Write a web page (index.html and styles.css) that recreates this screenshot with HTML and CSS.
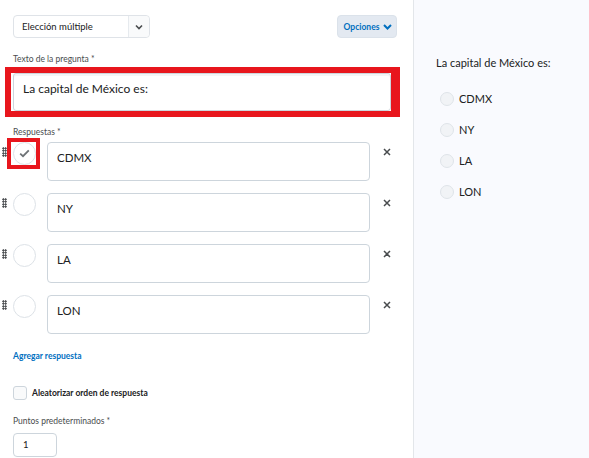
FILE: index.html
```html
<!DOCTYPE html>
<html lang="es">
<head>
<meta charset="utf-8">
<link rel="stylesheet" href="styles.css">
</head>
<body>
<div class="page">
  <div class="editor">
    <div class="toolbar">
      <div class="select">
        <span class="select-text">Elección múltiple</span>
        <span class="select-btn">
          <svg width="8" height="6" viewBox="0 0 8 6"><path d="M1 1.5 L4 4.5 L7 1.5" fill="none" stroke="#494c4e" stroke-width="1.6"/></svg>
        </span>
      </div>
      <button class="options">Opciones
        <svg width="9" height="6" viewBox="0 0 9 6"><path d="M1 1 L4.5 4.5 L8 1" fill="none" stroke="#006fbf" stroke-width="2"/></svg>
      </button>
    </div>

    <div class="label q-label">Texto de la pregunta *</div>
    <div class="highlight">
      <div class="textarea">La capital de México es:</div>
    </div>

    <div class="label a-label">Respuestas *</div>
    <div class="answers">
      <div class="answer">
        <span class="drag"></span>
        <span class="mark-hl"><span class="radio checked">
          <svg width="11" height="9" viewBox="0 0 11 9"><path d="M1.2 4.6 L4 7.2 L9.8 1.3" fill="none" stroke="#6e7376" stroke-width="1.8"/></svg>
        </span></span>
        <div class="ans-box">CDMX</div>
        <span class="remove"><svg width="8" height="8" viewBox="0 0 8 8"><path d="M1 1 L7 7 M7 1 L1 7" stroke="#494c4e" stroke-width="1.5"/></svg></span>
      </div>
      <div class="answer">
        <span class="drag"></span>
        <span class="mark"><span class="radio"></span></span>
        <div class="ans-box">NY</div>
        <span class="remove"><svg width="8" height="8" viewBox="0 0 8 8"><path d="M1 1 L7 7 M7 1 L1 7" stroke="#494c4e" stroke-width="1.5"/></svg></span>
      </div>
      <div class="answer">
        <span class="drag"></span>
        <span class="mark"><span class="radio"></span></span>
        <div class="ans-box">LA</div>
        <span class="remove"><svg width="8" height="8" viewBox="0 0 8 8"><path d="M1 1 L7 7 M7 1 L1 7" stroke="#494c4e" stroke-width="1.5"/></svg></span>
      </div>
      <div class="answer">
        <span class="drag"></span>
        <span class="mark"><span class="radio"></span></span>
        <div class="ans-box">LON</div>
        <span class="remove"><svg width="8" height="8" viewBox="0 0 8 8"><path d="M1 1 L7 7 M7 1 L1 7" stroke="#494c4e" stroke-width="1.5"/></svg></span>
      </div>
    </div>

    <a class="add-link">Agregar respuesta</a>

    <label class="check-row"><span class="checkbox"></span><span class="check-label">Aleatorizar orden de respuesta</span></label>

    <div class="label p-label">Puntos predeterminados *</div>
    <div class="points">1</div>
  </div>

  <div class="preview">
    <div class="preview-q">La capital de México es:</div>
    <ul class="preview-list">
      <li><span class="p-radio"></span>CDMX</li>
      <li><span class="p-radio"></span>NY</li>
      <li><span class="p-radio"></span>LA</li>
      <li><span class="p-radio"></span>LON</li>
    </ul>
  </div>
</div>
</body>
</html>
```
FILE: styles.css
```css
* { box-sizing: border-box; }
html, body { margin: 0; padding: 0; }
body {
  font-family: Lato, "Open Sans", sans-serif;
  color: #202122;
  background: #fff;
  width: 589px;
  height: 458px;
  overflow: hidden;
}
.page {
  display: flex;
  height: 458px;
}
.editor {
  width: 414px;
  flex: none;
  border-right: 1px solid #e3e6ea;
  padding: 15px 16px 0 13px;
  background: #fff;
}
.toolbar {
  display: flex;
  justify-content: space-between;
  align-items: flex-start;
}
.select {
  width: 137px;
  height: 23px;
  border: 1px solid #dfe3e8;
  border-radius: 4px;
  display: flex;
  align-items: stretch;
  background: #fff;
}
.select-text {
  flex: 1;
  font-size: 9.5px;
  padding-left: 8px;
  display: flex;
  align-items: center;
  color: #202122;
}
.select-btn {
  width: 21px;
  border-left: 1px solid #e6eaee;
  background: #f9fafb;
  display: flex;
  align-items: center;
  justify-content: center;
  border-radius: 0 4px 4px 0;
}
.options {
  width: 60px;
  height: 23px;
  border: 1px solid #dbe2ea;
  border-radius: 4px;
  background: #e3e9f1;
  color: #006fbf;
  font-family: inherit;
  font-weight: 700;
  font-size: 8.5px;
  display: flex;
  align-items: center;
  justify-content: center;
  gap: 4px;
  padding: 0 0 0 2px;
}
.label {
  font-size: 8.5px;
  color: #494c4e;
}
.q-label { margin-top: 15px; line-height: 12px; }
.highlight {
  margin: 2px 0 0 -8px;
  width: 395px;
  border: 6px solid #e8161d;
  border-right-width: 9px;
  padding-left: 2px;
}
.textarea {
  height: 38px;
  border: 1px solid #cdd5dc;
  border-radius: 3px;
  font-size: 12px;
  padding: 7px 0 0 9px;
  color: #202122;
  background: #fff;
  box-shadow: inset 0 2px 0 rgba(181,189,194,0.15);
}
.a-label { margin-top: 9px; line-height: 12px; }
.answers {
  margin-top: 4px;
  display: flex;
  flex-direction: column;
  gap: 12px;
}
.answer {
  display: flex;
  align-items: flex-start;
  margin-left: -13px;
}
.drag {
  width: 5px;
  height: 10px;
  margin: 5px 0 0 2px;
  background-image: radial-gradient(circle, #3a3d40 0.9px, transparent 1.1px);
  background-size: 2.5px 2.5px;
  flex: none;
}
.mark, .mark-hl {
  width: 33px;
  height: 31px;
  margin: -4px 7px 0 0;
  display: flex;
  align-items: center;
  justify-content: center;
  flex: none;
}
.mark-hl {
  border: 4px solid #e8161d;
}
.mark .radio, .mark-hl .radio {
  margin-left: 1px;
}
.radio {
  width: 23px;
  height: 23px;
  border-radius: 50%;
  border: 1px solid #dde2e7;
  background: #fff;
  display: flex;
  align-items: center;
  justify-content: center;
}
.ans-box {
  width: 323px;
  height: 39px;
  border: 1px solid #cdd5dc;
  border-radius: 4px;
  font-size: 11.5px;
  padding: 8px 0 0 9px;
  background: #fff;
  flex: none;
}
.remove {
  display: flex;
  margin: 6px 0 0 13px;
}
.add-link {
  display: block;
  margin-top: 16px;
  font-size: 8.5px;
  color: #006fbf;
  font-weight: 700;
  line-height: 12px;
}
.check-row {
  display: flex;
  align-items: center;
  gap: 5px;
  margin-top: 24px;
}
.checkbox {
  width: 14px;
  height: 14px;
  border: 1px solid #cdd5dc;
  border-radius: 3px;
  background: #f9fafb;
}
.check-label {
  font-size: 8.5px;
  font-weight: 700;
  color: #202122;
}
.p-label { margin-top: 15px; line-height: 12px; }
.points {
  margin-top: 6px;
  width: 44px;
  height: 24px;
  border: 1px solid #cdd5dc;
  border-radius: 4px;
  font-size: 9.5px;
  padding: 5px 0 0 9px;
}
.preview {
  flex: 1;
  background: #f9fafe;
  padding: 56px 0 0 22px;
}
.preview-q {
  font-size: 11px;
  color: #202122;
  line-height: 13px;
}
.preview-list {
  list-style: none;
  margin: 23px 0 0 4px;
  padding: 0;
  display: flex;
  flex-direction: column;
  gap: 17px;
}
.preview-list li {
  display: flex;
  align-items: center;
  gap: 5px;
  font-size: 11px;
  line-height: 14px;
}
.p-radio {
  width: 14px;
  height: 14px;
  border-radius: 50%;
  border: 1px solid #dfe4e9;
  background: #f1f3f6;
}
```
